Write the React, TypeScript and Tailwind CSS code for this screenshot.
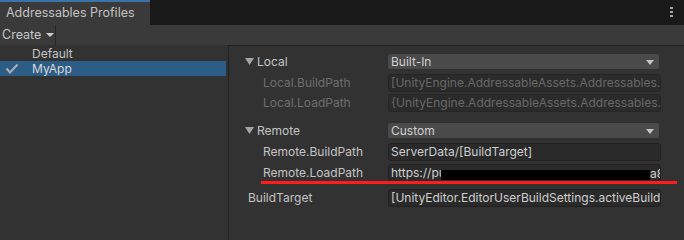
import React from "react";

const Tri = ({ color = "#a4a4a4" }: { color?: string }) => (
  <svg width="9" height="7" viewBox="0 0 9 7" className="shrink-0">
    <polygon points="0,0 9,0 4.5,7" fill={color} />
  </svg>
);

const DropArrow = () => (
  <svg width="8" height="5" viewBox="0 0 8 5" className="absolute right-[5px] top-[6px]">
    <polygon points="0,0 8,0 4,5" fill="#c4c4c4" />
  </svg>
);

function Dropdown({ label }: { label: string }) {
  return (
    <div className="relative w-[273px] h-[17px] rounded-[3px] bg-[#4a4a4a] border border-[#303030] flex items-center pl-[3px] text-[#d0d0d0] leading-none">
      {label}
      <DropArrow />
    </div>
  );
}

function Field({ text, disabled, children }: { text: string; disabled?: boolean; children?: React.ReactNode }) {
  return (
    <div
      className={
        "relative ml-[1px] w-[273px] h-[18px] rounded-[3px] border flex items-center pl-[2px] overflow-hidden whitespace-nowrap leading-none " +
        (disabled
          ? "bg-[#2b2b2b] border-[#252525] text-[#686868]"
          : "bg-[#2a2a2a] border-[#212121] text-[#cfcfcf]")
      }
    >
      {text}
      {children}
    </div>
  );
}

export default function App() {
  return (
    <div
      className="relative w-[684px] h-[240px] overflow-hidden bg-[#323232] flex flex-col text-[12px] text-[#c4c4c4]"
      style={{ fontFamily: "Inter, 'Noto Sans', sans-serif" }}
    >
      {/* Tab bar */}
      <div className="h-[25px] bg-[#191919] flex items-stretch shrink-0">
        <div className="w-[150px] bg-[#3a3a3a] border-t-2 border-[#3a72aa] flex items-center pl-[6px] text-[12.5px] text-[#c2c2c2]">
          Addressables Profiles
        </div>
        <div className="flex-1" />
        <div className="w-[14px] flex flex-col items-start pt-[7px] gap-[2px]">
          <div className="w-[3px] h-[2px] bg-[#a8a8a8]" />
          <div className="w-[3px] h-[2px] bg-[#a8a8a8]" />
          <div className="w-[3px] h-[2px] bg-[#a8a8a8]" />
        </div>
      </div>

      {/* Toolbar */}
      <div className="h-[20px] bg-[#3a3a3a] flex items-stretch shrink-0">
        <div className="w-[56px] border-r border-[#262626] flex items-center pl-[2px] gap-[5px] text-[#c8c8c8]">
          <span className="text-[12.5px]">Create</span>
          <svg width="8" height="4" viewBox="0 0 8 4">
            <polygon points="0,0 8,0 4,4" fill="#d0d0d0" />
          </svg>
        </div>
      </div>

      {/* Main */}
      <div className="flex flex-1 min-h-0">
        {/* Left list */}
        <div className="w-[228px] shrink-0 flex flex-col pt-[1px]">
          <div className="h-[15px] flex items-center pl-[32px] text-[#c4c4c4]">Default</div>
          <div className="h-[15px] mr-[2px] bg-[#2c5d87] flex items-center relative pl-[32px] text-[#d8d8d8]">
            <svg width="14" height="11" viewBox="0 0 14 11" className="absolute left-[5px] top-[2px]">
              <polyline points="1.5,5.5 5,9.5 12.5,1.5" fill="none" stroke="#a8b0b8" strokeWidth="2" />
            </svg>
            MyApp
          </div>
        </div>

        {/* Right pane */}
        <div className="flex-1 border-l border-t border-[#222222] flex flex-col pt-[7px]">
          <div className="flex items-center h-[17px]">
            <div className="w-[158px] pl-[16px] flex items-center gap-[3px]">
              <Tri />
              <span>Local</span>
            </div>
            <Dropdown label="Built-In" />
          </div>
          <div className="flex items-center h-[18px] mt-[4px]">
            <div className="w-[158px] pl-[34px] text-[#6e6e6e]">Local.BuildPath</div>
            <Field disabled text="[UnityEngine.AddressableAssets.Addressables.BuildPath]" />
          </div>
          <div className="flex items-center h-[18px] mt-[2px]">
            <div className="w-[158px] pl-[34px] text-[#6e6e6e]">Local.LoadPath</div>
            <Field disabled text="{UnityEngine.AddressableAssets.Addressables.RuntimePath}" />
          </div>

          <div className="flex items-center h-[17px] mt-[10px]">
            <div className="w-[158px] pl-[16px] flex items-center gap-[3px]">
              <Tri />
              <span>Remote</span>
            </div>
            <Dropdown label="Custom" />
          </div>
          <div className="flex items-center h-[18px] mt-[4px]">
            <div className="w-[158px] pl-[34px]">Remote.BuildPath</div>
            <Field text="ServerData/[BuildTarget]" />
          </div>
          <div className="flex items-center h-[18px] mt-[3px]">
            <div className="w-[158px] pl-[34px]">Remote.LoadPath</div>
            <Field text="https://pu">
              <div className="absolute left-[52px] top-[5px] w-[209px] h-[10px] bg-black" />
              <span className="absolute left-[261px] top-[3px]">a8</span>
            </Field>
          </div>
          <div className="flex items-center h-[18px] mt-[7px]">
            <div className="w-[158px] pl-[19px]">BuildTarget</div>
            <Field text="[UnityEditor.EditorUserBuildSettings.activeBuildTarget]" />
          </div>
        </div>
      </div>

      {/* Red annotation line */}
      <div className="absolute left-[261px] top-[181px] w-[416px] h-[3px] bg-[#ff1c1c]" />
    </div>
  );
}
